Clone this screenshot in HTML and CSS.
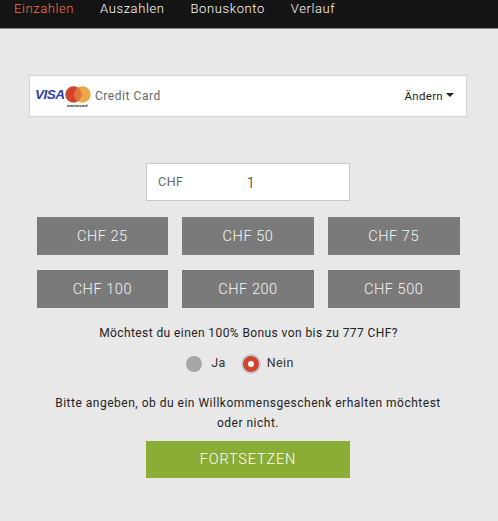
FILE: index.html
```html
<!DOCTYPE html>
<html lang="de">
<head>
<meta charset="utf-8">
<title>Einzahlen</title>
<link rel="stylesheet" href="styles.css">
</head>
<body>
<nav class="nav">
  <a class="nav-link active">Einzahlen</a>
  <a class="nav-link">Auszahlen</a>
  <a class="nav-link">Bonuskonto</a>
  <a class="nav-link">Verlauf</a>
</nav>
<main class="content">
  <section class="card">
    <span class="visa">VISA</span>
    <span class="mc">
      <svg class="mc-svg" viewBox="0 0 26 17" width="26" height="17" aria-hidden="true">
        <circle cx="8.5" cy="8.5" r="8.2" fill="#d4432b"/>
        <circle cx="17.5" cy="8.5" r="8.2" fill="#eca647"/>
        <path d="M13 1.7a8.2 8.2 0 0 1 0 13.6a8.2 8.2 0 0 1 0-13.6z" fill="#e2733a"/>
      </svg>
      <span class="mc-text">mastercard</span>
    </span>
    <span class="card-name">Credit Card</span>
    <span class="change">Ändern<i class="caret"></i></span>
  </section>
  <div class="amount">
    <span class="cur">CHF</span>
    <span class="val">1</span>
  </div>
  <div class="presets">
    <button class="preset">CHF 25</button>
    <button class="preset">CHF 50</button>
    <button class="preset">CHF 75</button>
    <button class="preset">CHF 100</button>
    <button class="preset">CHF 200</button>
    <button class="preset">CHF 500</button>
  </div>
  <p class="question">Möchtest du einen 100% Bonus von bis zu 777 CHF?</p>
  <div class="radios">
    <span class="radio-item"><i class="radio"></i>Ja</span>
    <span class="radio-item"><i class="radio on"></i>Nein</span>
  </div>
  <p class="note">Bitte angeben, ob du ein Willkommensgeschenk erhalten möchtest oder nicht.</p>
  <button class="submit">FORTSETZEN</button>
</main>
</body>
</html>
```
FILE: styles.css
```css
* { box-sizing: border-box; }
html, body { margin: 0; height: 100%; }
body {
  background: #e8e8e8;
  font-family: "Roboto", "Liberation Sans", sans-serif;
  color: #222;
  overflow: hidden;
}
.nav {
  height: 29px;
  background: #141414;
  border-bottom: 1px solid #888;
  display: flex;
  gap: 26px;
  padding: 0 0 0 14px;
  font-size: 13px;
  font-weight: 300;
  letter-spacing: 0.6px;
  line-height: 17px;
}
.nav-link { color: #fff; }
.nav-link.active { color: #ff7040; }
.content { width: 496px; display: flex; flex-direction: column; align-items: center; }
.card {
  width: 438px;
  height: 42px;
  margin-top: 46px;
  background: #fff;
  border: 1px solid #d2d2d2;
  display: flex;
  align-items: center;
  padding: 0 12px 0 5px;
}
.visa {
  font-family: "Liberation Sans", sans-serif;
  font-weight: 700;
  font-style: italic;
  font-size: 13.5px;
  letter-spacing: -0.5px;
  color: #2f3fae;
  width: 30px;
  margin-bottom: 3px;
}
.mc { position: relative; width: 26px; height: 26px; display: block; margin-top: 5px; }
.mc-svg { display: block; }
.mc-text {
  position: absolute;
  left: 2px;
  top: 17px;
  font-size: 4px;
  font-weight: 700;
  line-height: 5px;
  color: #333;
  white-space: nowrap;
}
.card-name {
  margin-left: 4px;
  font-size: 12px;
  letter-spacing: 0.55px;
  color: #666;
}
.change {
  margin-left: auto;
  font-size: 11.5px;
  letter-spacing: 0.3px;
  color: #222;
  display: flex;
  align-items: center;
}
.caret {
  margin-left: 3px;
  margin-bottom: 2px;
  border-left: 4px solid transparent;
  border-right: 4px solid transparent;
  border-top: 4px solid #222;
}
.amount {
  width: 204px;
  height: 38px;
  margin-top: 46px;
  background: #fff;
  border: 1px solid #c8c8c8;
  display: flex;
  align-items: center;
  padding: 0 0 0 11px;
  color: #666;
}
.cur { font-size: 12.5px; letter-spacing: 0.5px; margin-bottom: 2px; }
.val { font-size: 15px; font-weight: 300; margin-left: 63px; color: #222; padding-top: 1px; }
.presets {
  width: 423px;
  margin-top: 16px;
  display: grid;
  grid-template-columns: repeat(3, 1fr);
  column-gap: 14px;
  row-gap: 15px;
}
.preset {
  height: 38px;
  border: 0;
  padding: 1px 0 0;
  background: #7a7a7a;
  color: #f6f6f6;
  font-family: inherit;
  font-size: 14.5px;
  font-weight: 300;
  letter-spacing: 0.55px;
}
.question {
  margin: 17px 0 0;
  padding-left: 1px;
  font-size: 12px;
  line-height: 16px;
  letter-spacing: 0.41px;
  color: #222;
}
.radios {
  margin-top: 11px;
  display: flex;
  gap: 17px;
  margin-right: 16px;
  font-size: 12.5px;
  letter-spacing: 0.4px;
  color: #333;
}
.radio-item { display: flex; align-items: center; gap: 9px; height: 20px; }
.radio-item:last-child { gap: 8px; }
.radio {
  width: 16px;
  height: 16px;
  border-radius: 50%;
  background: #a6a6a6;
  margin-top: 4px;
}
.radio.on {
  background: #fff;
  border: 5px solid #d4432b;
  box-shadow: 0 0 0 2px #c4cad6;
}
.note {
  width: 400px;
  margin: 21px 0 0;
  text-align: center;
  font-size: 12px;
  line-height: 20px;
  letter-spacing: 0.5px;
  color: #222;
}
.submit {
  width: 204px;
  height: 37px;
  margin-top: 8px;
  border: 0;
  padding: 0;
  background: #8aae35;
  color: #fff;
  font-family: inherit;
  font-size: 14.5px;
  font-weight: 300;
  letter-spacing: 0.85px;
}
```
